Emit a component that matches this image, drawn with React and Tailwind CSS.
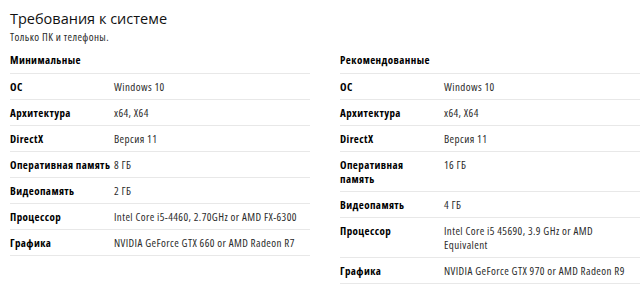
import React from "react";

const minRows = [
  ["ОС", "Windows 10"],
  ["Архитектура", "x64, X64"],
  ["DirectX", "Версия 11"],
  ["Оперативная память", "8 ГБ"],
  ["Видеопамять", "2 ГБ"],
  ["Процессор", "Intel Core i5-4460, 2.70GHz or AMD FX-6300"],
  ["Графика", "NVIDIA GeForce GTX 660 or AMD Radeon R7"],
];

const recRows = [
  ["ОС", "Windows 10"],
  ["Архитектура", "x64, X64"],
  ["DirectX", "Версия 11"],
  ["Оперативная\nпамять", "16 ГБ"],
  ["Видеопамять", "4 ГБ"],
  ["Процессор", "Intel Core i5 45690, 3.9 GHz or AMD Equivalent"],
  ["Графика", "NVIDIA GeForce GTX 970 or AMD Radeon R9"],
];

const body = { fontStretch: "87.5%", letterSpacing: "0.4px" };

function Table({ title, rows }) {
  return (
    <div className="w-[300px] shrink-0" style={body}>
      <div className="pt-[9px] pb-[6px] border-b border-[#e8e8e8] text-[11px] leading-[14px] font-bold text-black">
        {title}
      </div>
      {rows.map(([k, v]) => (
        <div key={k} className="flex border-b border-[#e8e8e8] pt-[6px] pb-[5px] text-[11px] leading-[14px]">
          <div className="w-[104px] shrink-0 font-bold text-black whitespace-pre-line">{k}</div>
          <div className="flex-1 text-[#2b2b2b] pr-[6px]">{v}</div>
        </div>
      ))}
    </div>
  );
}

export default function App() {
  return (
    <div
      className="w-[640px] h-[286px] overflow-hidden bg-white pl-[10px] pt-[9px]"
      style={{ fontFamily: '"Open Sans", "Noto Sans", sans-serif' }}
    >
      <h1 className="text-[14.5px] leading-[20px] font-normal text-[#111]">Требования к системе</h1>
      <p className="text-[11px] leading-[14px] text-[#2b2b2b] mt-[1px]" style={body}>Только ПК и телефоны.</p>
      <div className="flex gap-[30px]">
        <Table title="Минимальные" rows={minRows} />
        <Table title="Рекомендованные" rows={recRows} />
      </div>
    </div>
  );
}
